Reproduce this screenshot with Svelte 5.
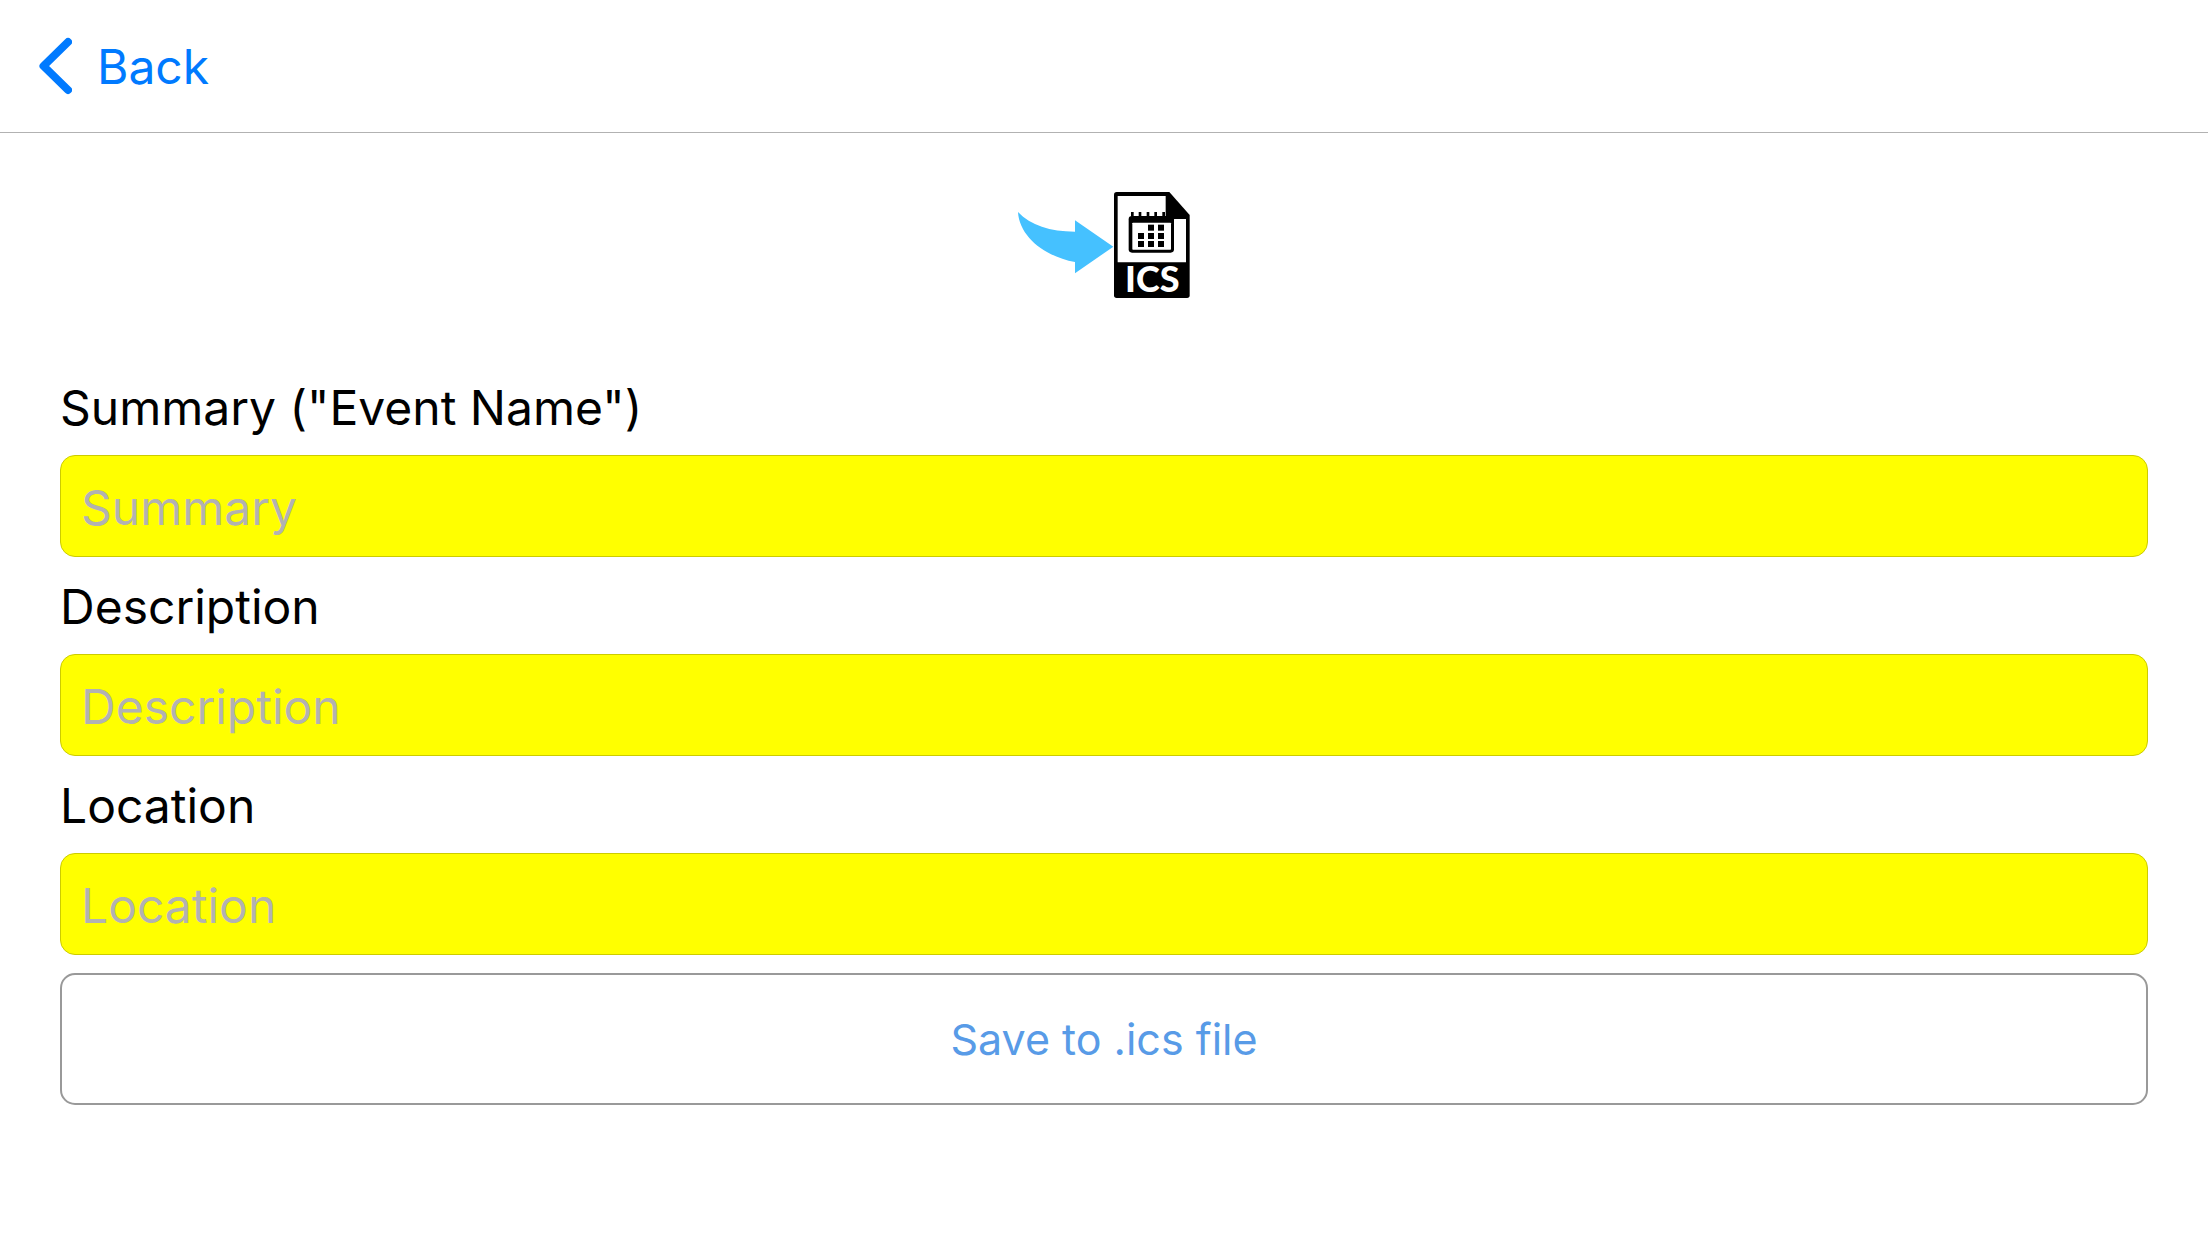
<script>
  const fields = [
    { id: 'summary', label: 'Summary ("Event Name")', placeholder: 'Summary' },
    { id: 'description', label: 'Description', placeholder: 'Description' },
    { id: 'location', label: 'Location', placeholder: 'Location' }
  ];
  let values = $state({ summary: '', description: '', location: '' });

  const dots = [
    [444, 164], [474, 164],
    [414, 189], [444, 189], [474, 189],
    [414, 213], [444, 213], [474, 213]
  ];
  const rings = [393, 416, 440, 463, 487];
</script>

<header>
  <button class="back" type="button">
    <svg class="chevron" viewBox="0 0 34 58" aria-hidden="true">
      <path d="M30 5L5.500 29L30 53" />
    </svg>
    <span>Back</span>
  </button>
</header>

<main>
  <svg class="logo" viewBox="54 66 516 318" role="img" aria-label="Export to ICS">
    <path fill="#45c1ff" d="M54 126C92 166 150 185 225 185V151L340 230L225 310V276C135 260 58 200 54 126Z" />
    <path d="M350 66H508L569 135V376Q569 384 561 384H350Q342 384 342 376V74Q342 66 350 66Z" />
    <path fill="#fff" d="M353 78H497V147H558V277H353Z" />
    <rect x="386" y="138" width="136" height="110" rx="10" />
    <rect x="397" y="158" width="116" height="81" rx="2" fill="#fff" />
    {#each rings as x}
      <rect {x} y="126" width="8" height="14" />
    {/each}
    {#each dots as [x, y]}
      <rect {x} {y} width="18" height="18" />
    {/each}
    <text x="457" y="366" text-anchor="middle">ICS</text>
  </svg>

  <form onsubmit={(e) => e.preventDefault()}>
    {#each fields as field}
      <label for={field.id}>{field.label}</label>
      <input id={field.id} type="text" placeholder={field.placeholder} bind:value={values[field.id]} />
    {/each}
    <button class="save" type="submit">Save to .ics file</button>
  </form>
</main>

<style>
  :global(body) {
    margin: 0;
    background: #fff;
  }

  header,
  main {
    font-family: Inter, "Liberation Sans", sans-serif;
    font-size: 48px;
    color: #000;
  }

  header {
    display: flex;
    align-items: center;
    height: 132px;
    padding: 0 38px;
    border-bottom: 1px solid #b2b2b2;
  }

  button,
  input {
    box-sizing: border-box;
    margin: 0;
    font: inherit;
  }

  .back {
    display: flex;
    align-items: center;
    gap: 25px;
    padding: 0;
    border: 0;
    background: none;
    color: #007aff;
    cursor: pointer;
  }

  .chevron {
    width: 34px;
    height: 58px;
    fill: none;
    stroke: currentColor;
    stroke-width: 8;
    stroke-linecap: round;
    stroke-linejoin: round;
  }

  main {
    display: flex;
    flex-direction: column;
    gap: 78px;
    padding: 59px 60px;
  }

  .logo {
    align-self: center;
    width: 172px;
    height: 106px;
    overflow: visible;
  }

  .logo text {
    fill: #fff;
    font-family: Lato, sans-serif;
    font-size: 108px;
    font-weight: 900;
  }

  form {
    display: flex;
    flex-direction: column;
    gap: 18px;
  }

  label {
    padding-top: 3px;
    line-height: 58px;
  }

  input {
    width: 100%;
    height: 102px;
    padding: 3px 20px 0;
    border: 1px solid #cccc00;
    border-radius: 15px;
    background: #ff0;
    color: #000;
  }

  input::placeholder {
    color: #b2b2b2;
    opacity: 1;
  }

  .save {
    height: 132px;
    border: 2px solid #999;
    border-radius: 15px;
    background: #fff;
    color: #589be7;
    font-size: 43px;
    cursor: pointer;
  }
</style>
